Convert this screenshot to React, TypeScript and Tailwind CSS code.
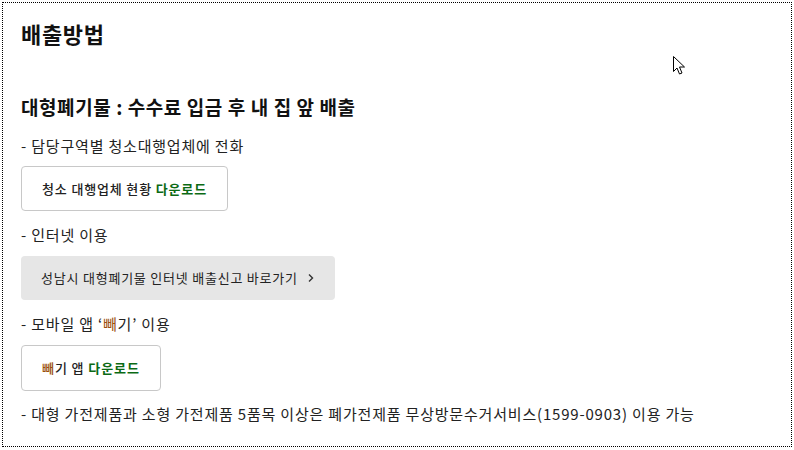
import React from 'react'

const font = { fontFamily: '"Noto Sans CJK KR", "Noto Sans", sans-serif' }

const Line = ({ children, className = '' }: { children: React.ReactNode; className?: string }) => (
    <p className={`text-[15px] leading-[22px] tracking-[0.054em] text-[#222] ${className}`}>{children}</p>
)

const Cursor = () => (
    <svg className="absolute left-[669px] top-[52px]" width="14" height="21" viewBox="0 0 14 21">
        <path d="M1.5 1.5 L1.5 16.5 L5 13 L7.5 19 L10 18 L7.5 12 L12.5 12 Z"
              fill="#fff" stroke="#000" strokeWidth="1" strokeLinejoin="miter"/>
    </svg>
)

const App = () => {
    return (
        <div className="relative m-[2px] h-[445px] w-[790px] border border-dotted border-black bg-white pl-[18px]"
             style={font}>
            <Cursor/>
            <h1 className="pt-[14px] text-[22px] leading-[32px] font-bold tracking-[0.03em] text-[#111]">배출방법</h1>

            <h2 className="mt-[45px] text-[19px] leading-[26px] font-bold tracking-[0.03em] text-[#111]">
                대형폐기물 : 수수료 입금 후 내 집 앞 배출
            </h2>

            <Line className="mt-[15px]">- 담당구역별 청소대행업체에 전화</Line>
            <button
                className="mt-[9px] flex h-[45px] items-center rounded border border-[#c8c8c8] bg-white px-5 text-[13px] font-medium tracking-[0.065em] text-[#222]">
                청소 대행업체 현황&nbsp;<span className="font-bold text-[#0b6a14]">다운로드</span>
            </button>

            <Line className="mt-[13px]">- 인터넷 이용</Line>
            <button
                className="mt-[10px] flex h-[44px] items-center rounded bg-[#e6e6e6] px-5 text-[13px] tracking-[0.06em] text-[#222]">
                성남시 대형폐기물 인터넷 배출신고 바로가기
                <svg className="ml-[9px]" width="8" height="10" viewBox="0 0 8 10">
                    <path d="M2 1.5 L5.5 5 L2 8.5" fill="none" stroke="#333" strokeWidth="1.4"/>
                </svg>
            </button>

            <Line className="mt-[13px]">
                - 모바일 앱 ‘<span className="text-[#9a4f0c]">빼</span>기’ 이용
            </Line>
            <button
                className="mt-[10px] flex h-[46px] items-center rounded border border-[#c8c8c8] bg-white px-5 text-[13px] font-medium tracking-[0.07em] text-[#222]">
                <span className="text-[#9a4f0c]">빼</span>기 앱&nbsp;<span className="font-bold text-[#0b6a14]">다운로드</span>
            </button>

            <Line className="mt-[12px]">
                - 대형 가전제품과 소형 가전제품 5품목 이상은 폐가전제품 무상방문수거서비스(1599-0903) 이용 가능
            </Line>
        </div>
    )
}

export default App
